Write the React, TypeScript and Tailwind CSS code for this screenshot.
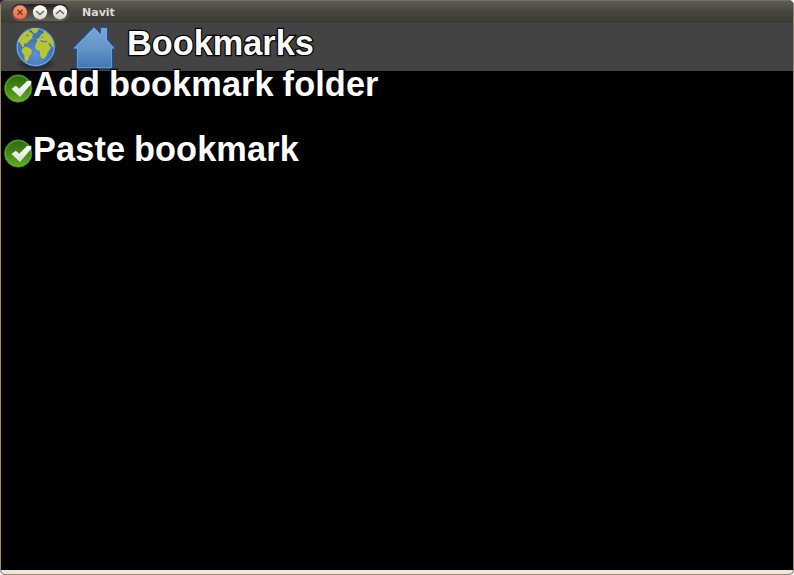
import React from 'react';

function Globe() {
  return (
    <svg className="block h-12 w-14 shrink-0" viewBox="0 0 56 48" aria-hidden="true">
      <defs>
        <radialGradient id="sea" cx="0.5" cy="0.7" r="0.65">
          <stop offset="0" stopColor="#5f91cf" />
          <stop offset="0.6" stopColor="#4377bb" />
          <stop offset="1" stopColor="#3b6fb2" />
        </radialGradient>
        <radialGradient id="globeShadow">
          <stop offset="0.5" stopColor="#000" stopOpacity="0.35" />
          <stop offset="1" stopColor="#000" stopOpacity="0" />
        </radialGradient>
      </defs>
      <ellipse cx="28" cy="41" rx="21" ry="7" fill="url(#globeShadow)" />
      <circle cx="27.700" cy="24" r="19.400" fill="url(#sea)" stroke="#2b5b9d" strokeWidth="0.800" />
      <circle cx="27.700" cy="24" r="18.500" fill="none" stroke="#86afe0" strokeWidth="1" />
      <g fill="#b7c433" transform="translate(6 1) scale(0.33333)">
        <path d="M12 52 L18 39 L27 28 L39 20 L47 19 L46 25 L53 26 L58 34 L53 39 L57 43 L48 47 L43 54 L37 59 L32 58 L29 62 L31 68 L37 70 L34 73 L25 68 L18 57 L15 54 Z" />
        <path d="M49 15 L61 12 L74 15 L70 24 L61 29 L56 24 Z" />
        <path d="M29 72 L38 68 L47 73 L54 79 L52 91 L46 95 L44 104 L38 114 L32 109 L31 94 L23 84 L24 75 Z" />
        <path d="M70 52 L68 45 L75 43 L78 36 L83 30 L90 27 L86 20 L95 24 L107 33 L115 46 L119 60 L118 70 L113 66 L108 58 L103 58 L107 67 L112 70 L106 79 L101 86 L97 96 L89 105 L82 103 L78 94 L78 81 L69 78 L63 70 L65 60 Z" />
      </g>
      <g fill="#4678b8" transform="translate(6 1) scale(0.33333)">
        <path d="M77 51 L84 49 L91 52 L99 50 L101 53 L94 55 L85 54 Z M82 38 L87 37 L86 40 L81 41 Z" />
        <path d="M36 34 L42 31 L43 35 L39 38 Z" />
      </g>
    </svg>
  );
}

function House() {
  return (
    <svg className="block h-12 w-14 shrink-0" viewBox="0 0 56 48" aria-hidden="true">
      <defs>
        <linearGradient id="house" x2="0" y2="1">
          <stop offset="0" stopColor="#78a6d8" />
          <stop offset="0.5" stopColor="#6595ca" />
          <stop offset="1" stopColor="#3f75b1" />
        </linearGradient>
      </defs>
      <path d="M6.500 45 H53 V47 H6.500 Z" fill="#36373a" />
      <path d="M28 3.500 L34.500 10 V4.500 H41.500 V16.500 L50 26 H46.500 V45.500 H10.500 V26 H6 Z" fill="url(#house)" stroke="#1d4d93" strokeWidth="1.200" />
      <path d="M28 5 L35.500 12.500 V5.500 H40.500 V17 L47.600 25 H45.500 V44.500 H11.500 V25 H8.400 Z" fill="none" stroke="#83aedb" strokeWidth="0.600" />
    </svg>
  );
}

function Check() {
  return (
    <svg className="mt-[2px] block h-8 w-8 shrink-0" viewBox="0 0 32 32" aria-hidden="true">
      <defs>
        <linearGradient id="green" x2="0" y2="1">
          <stop stopColor="#2e6813" />
          <stop offset="0.55" stopColor="#458c14" />
          <stop offset="1" stopColor="#65ae23" />
        </linearGradient>
        <linearGradient id="tick" x2="0" y2="1">
          <stop stopColor="#fff" />
          <stop offset="1" stopColor="#dedede" />
        </linearGradient>
      </defs>
      <circle cx="17.200" cy="15.500" r="13.700" fill="url(#green)" stroke="#2d7312" strokeWidth="0.900" />
      <circle cx="17.200" cy="15.500" r="12.900" fill="none" stroke="#70b348" strokeWidth="0.800" />
      <path d="M10.500 16 L14.800 12.700 L18.200 15.700 L26 8 L30.300 7.700 L30.300 10.700 L19 24 Z" fill="url(#tick)" />
    </svg>
  );
}

function WindowButtons() {
  return (
    <svg className="mt-1 block h-[17px] w-[62px] shrink-0" viewBox="0 0 62 17" aria-hidden="true">
      <defs>
        <linearGradient id="well" x2="0" y2="1">
          <stop stopColor="#242421" />
          <stop offset="1" stopColor="#66635c" />
        </linearGradient>
        <linearGradient id="close" x2="0" y2="1">
          <stop stopColor="#f7a07c" />
          <stop offset="1" stopColor="#ea683d" />
        </linearGradient>
        <linearGradient id="button" x2="0" y2="1">
          <stop stopColor="#fff" />
          <stop offset="1" stopColor="#dad6ce" />
        </linearGradient>
      </defs>
      <rect width="59" height="17" x="0.700" rx="8.500" fill="url(#well)" />
      <circle cx="10" cy="8.300" r="7.200" fill="url(#close)" stroke="#81391f" strokeWidth="0.500" />
      <circle cx="30" cy="8.300" r="7.100" fill="url(#button)" />
      <circle cx="50" cy="8.300" r="7.100" fill="url(#button)" />
      <path d="M7.500 5.800 L12.500 10.800 M12.500 5.800 L7.500 10.800" stroke="#73402c" strokeWidth="1.500" />
      <path d="M26 7 L30 10.500 L34 7 M46 10 L50 6.500 L54 10" fill="none" stroke="#696861" strokeWidth="1.500" />
    </svg>
  );
}

const entries = ['Add bookmark folder', 'Paste bookmark'];
const label =
  "font-['Liberation_Sans',sans-serif] text-[34.3px] font-bold leading-[39px] text-white whitespace-nowrap [-webkit-text-stroke:2.4px_black] [paint-order:stroke_fill]";

export default function App() {
  return (
    <div className="h-[575px] w-[794px] bg-white bg-[linear-gradient(135deg,#271642_4px,white_4px)]">
      <main className="flex h-full flex-col overflow-hidden rounded-[5px] border border-[#9d8767] border-t-[#77705f] bg-black">
        <header className="flex h-[22px] shrink-0 items-start bg-linear-to-b from-[#605d55] via-[#454540] to-[#3c3b36] pl-[9px]">
          <div className="-mt-px"><WindowButtons /></div>
          <h1 className="ml-[10px] mt-px font-['DejaVu_Sans',sans-serif] text-[11px] font-bold leading-[22px] text-[#dfdbd2]">Navit</h1>
        </header>
        <nav className="flex h-12 shrink-0 items-start bg-[#434343] pl-[7px]">
          <Globe />
          <div className="ml-[2px]"><House /></div>
          <h2 className={`${label} ml-[5px] mt-px`}>Bookmarks</h2>
        </nav>
        <section className="flex-1">
          {entries.map((entry) => (
            <div className="flex h-[65px] items-start" key={entry}>
              <Check />
              <span className={`${label} -mt-[6px] tracking-[0.12px] [word-spacing:-0.8px]`}>{entry}</span>
            </div>
          ))}
        </section>
        <footer className="h-1 shrink-0 bg-linear-to-b from-[#f1e8e6] to-[#eee5dc]" />
      </main>
    </div>
  );
}
